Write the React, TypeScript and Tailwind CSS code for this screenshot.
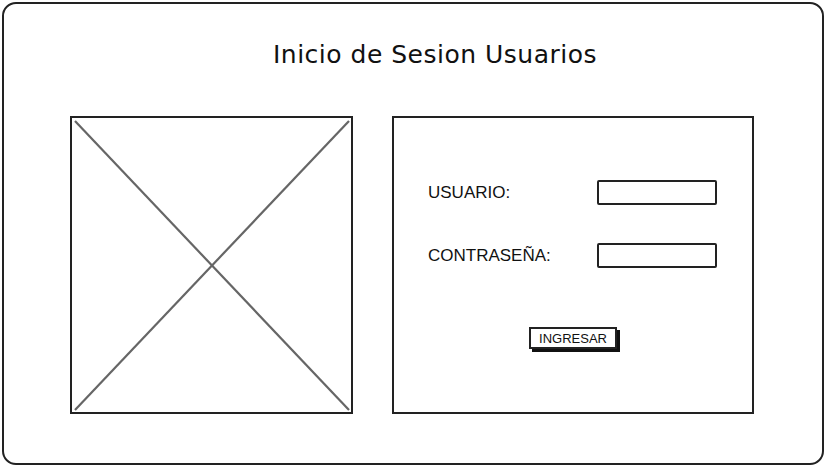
import React from 'react';

const ImagePlaceholder = () => {
  return (
    <div className="relative w-[283px] h-[298px] border-2 border-[#222] bg-white">
      <svg className="absolute inset-0 w-full h-full" viewBox="0 0 279 294" preserveAspectRatio="none" fill="none">
        <line x1="3" y1="3" x2="277" y2="292" stroke="#666" strokeWidth="2.2" />
        <line x1="277" y1="3" x2="3" y2="292" stroke="#666" strokeWidth="2.2" />
      </svg>
    </div>
  );
};

const Field = ({ label }: { label: string }) => (
  <div className="flex items-center h-[25px]">
    <span className="w-[169px] text-[17px] text-[#111] font-['Liberation_Sans',Arial,sans-serif]">{label}</span>
    <div className="w-[120px] h-[25px] border-2 border-[#222] rounded-[2px] bg-white" />
  </div>
);

export default function App() {
  return (
    <div className="w-[826px] h-[467px] p-[2px] bg-white">
      <div className="h-full border-2 border-[#222] rounded-[14px] flex flex-col">
        {/* Title */}
        <h1 className="pt-[35px] pl-[44px] text-center text-[25px] leading-[32px] tracking-[0.5px] text-[#111] font-['DejaVu_Sans',sans-serif]">
          Inicio de Sesion Usuarios
        </h1>

        {/* Content */}
        <div className="flex mt-[45px] pl-[66px] gap-[39px]">
          <ImagePlaceholder />

          <div className="w-[362px] h-[298px] border-2 border-[#222] bg-white flex flex-col pt-[62px] pl-[34px]">
            <div className="flex flex-col gap-[38px]">
              <Field label="USUARIO:" />
              <Field label="CONTRASEÑA:" />
            </div>
            <div className="flex justify-center mt-[59px] pr-[34px]">
              <button className="w-[88px] h-[22px] border-2 border-[#222] bg-white shadow-[3px_3px_0_#111] text-[13px] leading-none text-[#111] font-['Liberation_Sans',Arial,sans-serif]">
                INGRESAR
              </button>
            </div>
          </div>
        </div>
      </div>
    </div>
  );
}
